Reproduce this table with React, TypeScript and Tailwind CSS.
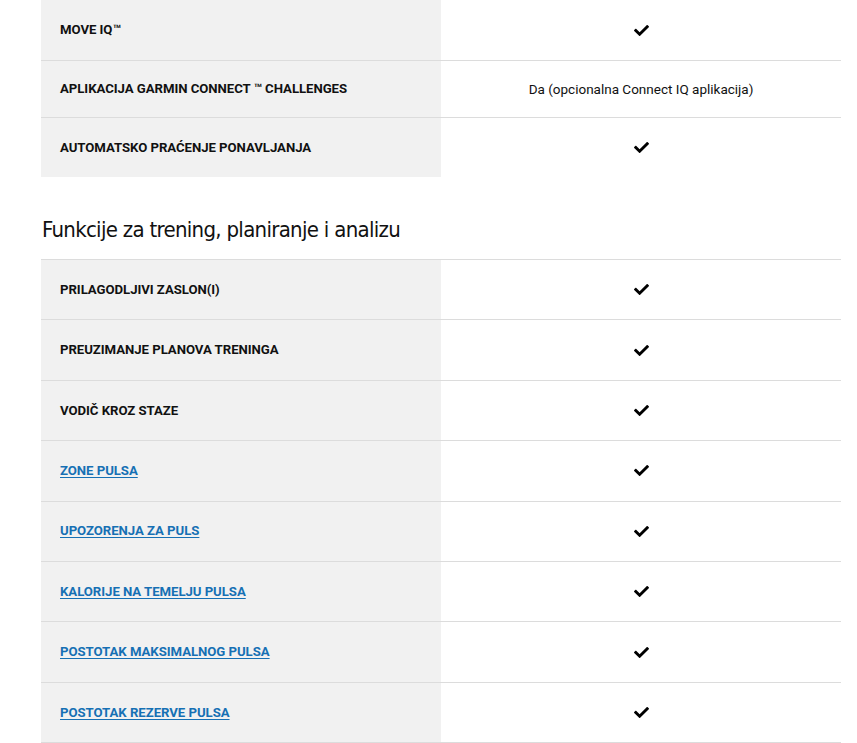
import { FaCheck } from 'react-icons/fa';

type Row = { label: string; value?: string; link?: boolean; h?: string };

const topRows: Row[] = [
  { label: 'MOVE IQ™', h: 'h-[60px]' },
  { label: 'APLIKACIJA GARMIN CONNECT ™ CHALLENGES', value: 'Da (opcionalna Connect IQ aplikacija)', h: 'h-[57px]' },
  { label: 'AUTOMATSKO PRAĆENJE PONAVLJANJA', h: 'h-[60px]' },
];

const trainingRows: Row[] = [
  { label: 'PRILAGODLJIVI ZASLON(I)' },
  { label: 'PREUZIMANJE PLANOVA TRENINGA' },
  { label: 'VODIČ KROZ STAZE' },
  { label: 'ZONE PULSA', link: true },
  { label: 'UPOZORENJA ZA PULS', link: true },
  { label: 'KALORIJE NA TEMELJU PULSA', link: true },
  { label: 'POSTOTAK MAKSIMALNOG PULSA', link: true },
  { label: 'POSTOTAK REZERVE PULSA', link: true },
];

function SpecRow({ row, first }: { row: Row; first?: boolean }) {
  return (
    <div className={`flex ${row.h ?? 'h-[60.4px]'} ${first ? '' : 'border-t border-[#dcdcdc]'}`}>
      <div className="flex w-[400px] shrink-0 items-center bg-[#f1f1f1] pl-[19px]">
        {row.link ? (
          <a href="#" className="text-[13.2px] font-bold tracking-[-0.05px] text-[#1670b4] underline underline-offset-[2px]">
            {row.label}
          </a>
        ) : (
          <span className="text-[13.2px] font-bold tracking-[-0.05px] text-[#111]">{row.label}</span>
        )}
      </div>
      <div className="flex flex-1 items-center justify-center text-[13.5px] text-[#111]">
        {row.value ? row.value : <FaCheck className="h-[15px] w-[15px] text-black" />}
      </div>
    </div>
  );
}

export default function App() {
  return (
    <div className="min-h-screen bg-white font-['Roboto',sans-serif]">
      <div className="ml-[41px] w-[800px]">
        <div>
          {topRows.map((r, i) => (
            <SpecRow key={r.label} row={r} first={i === 0} />
          ))}
        </div>

        <h2 className="pt-[35px] pb-[12px] pl-[1px] font-['DejaVu_Sans',sans-serif] font-stretch-condensed text-[22px] leading-[35px] tracking-[-0.7px] text-[#111]">
          Funkcije za trening, planiranje i analizu
        </h2>

        <div className="border-b border-[#dcdcdc]">
          {trainingRows.map(r => (
            <SpecRow key={r.label} row={r} />
          ))}
        </div>
      </div>
    </div>
  );
}
